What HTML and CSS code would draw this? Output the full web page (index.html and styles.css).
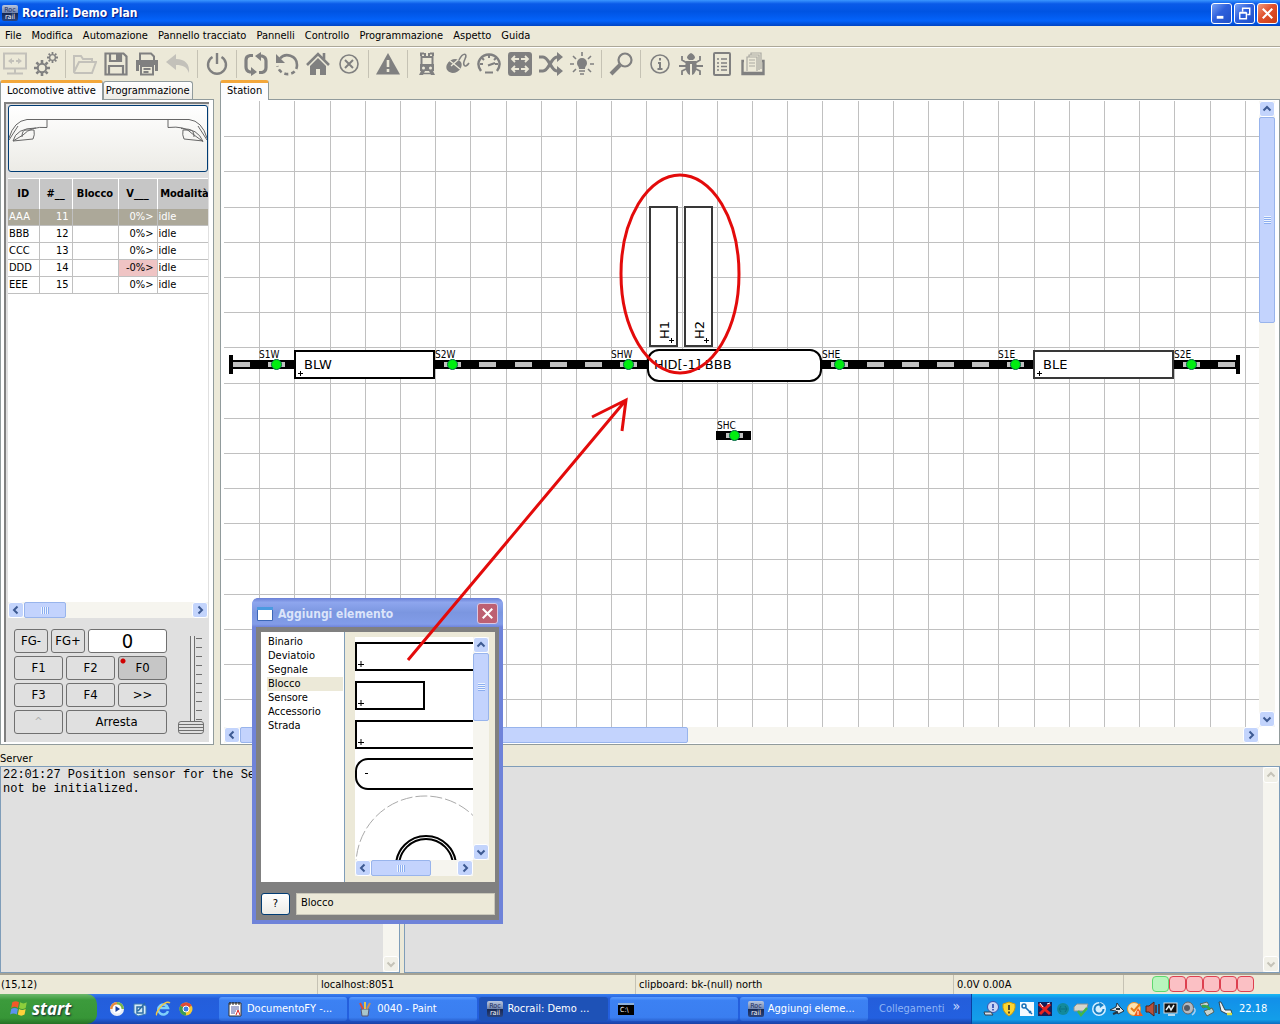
FILE: index.html
```html
<!DOCTYPE html>
<html lang="it">
<head>
  <meta charset="UTF-8">
  <meta name="viewport" content="width=device-width, initial-scale=1.0">
  <title>Rocrail: Demo Plan</title>
  <link rel="stylesheet" href="styles.css">
</head>
<body>
  <svg class="defs" width="0" height="0">
    <defs>
      <linearGradient id="logoFill" x1="0" y1="0" x2="0" y2="1">
        <stop offset="0" stop-color="#b9c6de"/><stop offset=".5" stop-color="#6f83ad"/><stop offset=".5" stop-color="#16264f"/><stop offset="1" stop-color="#2b4580"/>
      </linearGradient>
    </defs>
    <symbol id="up" viewBox="0 0 10 10"><path d="M1.500 6.500 5 3l3.500 3.500" fill="none" stroke="currentColor" stroke-width="2"/></symbol>
    <symbol id="down" viewBox="0 0 10 10"><path d="M1.500 3.500 5 7l3.500-3.500" fill="none" stroke="currentColor" stroke-width="2"/></symbol>
    <symbol id="left" viewBox="0 0 10 10"><path d="M6.500 1.500 3 5l3.500 3.500" fill="none" stroke="currentColor" stroke-width="2"/></symbol>
    <symbol id="right" viewBox="0 0 10 10"><path d="M3.500 1.500 7 5 3.500 8.500" fill="none" stroke="currentColor" stroke-width="2"/></symbol>
    <symbol id="gear" viewBox="-8 -8 16 16">
      <circle r="4.200" fill="none" stroke="currentColor" stroke-width="2"/>
      <path d="M0-8v3M0 5v3M-8 0h3M5 0h3M-5.600-5.600l2 2M3.600 3.600l2 2M-5.600 5.600l2-2M3.600-3.600l2-2" stroke="currentColor" stroke-width="2.600"/>
    </symbol>
  </svg>

  <header class="titlebar">
    <svg class="logo" viewBox="0 0 16 16"><rect width="16" height="16" rx="2" fill="url(#logoFill)"/><text x="8" y="7" fill="#1d2d5c">Roc</text><text x="8" y="14" fill="#fff">rail</text></svg>
    <h1>Rocrail: Demo Plan</h1>
    <button class="win-btn" aria-label="Riduci"><svg viewBox="0 0 20 20"><path d="M5 14h7" stroke="#fff" stroke-width="3"/></svg></button>
    <button class="win-btn" aria-label="Ripristina"><svg viewBox="0 0 20 20"><path d="M5 9.500h7v6H5zM5 9h7M8 8V4.500h7.500v6.500H13M8 4.500h8" stroke="#fff" stroke-width="1.500" fill="none"/></svg></button>
    <button class="win-btn close" aria-label="Chiudi"><svg viewBox="0 0 20 20"><path d="M5 5l10 10M15 5 5 15" stroke="#fff" stroke-width="2.200"/></svg></button>
  </header>

  <nav class="menu">
    <button>File</button>
    <button>Modifica</button>
    <button>Automazione</button>
    <button>Pannello tracciato</button>
    <button>Pannelli</button>
    <button>Controllo</button>
    <button>Programmazione</button>
    <button>Aspetto</button>
    <button>Guida</button>
  </nav>

  <div class="toolbar">
    <button disabled aria-label="Connetti"><svg viewBox="0 0 24 24"><path d="M1 1.500h22v15H1zM12 17v4M4 21.500h16" fill="none" stroke="currentColor" stroke-width="2"/><path d="M5 9l4-3v2h2v2H9v2zM19 9l-4-3v2h-2v2h2v2z" fill="currentColor"/></svg></button>
    <button aria-label="Proprietà"><svg viewBox="0 0 24 24"><use href="#gear" x="0" y="8" width="16" height="16"/><use href="#gear" x="13" y="0" width="11" height="11"/></svg></button>
    <span class="sep"></span>
    <button disabled aria-label="Apri"><svg viewBox="0 0 24 24"><path d="M1 20V4h7l2 3h9v3M1 20 6 10h17l-4 11H2z" fill="none" stroke="currentColor" stroke-width="2"/></svg></button>
    <button aria-label="Salva"><svg viewBox="0 0 24 24"><path d="M1.500 1.500h18l3 3v18h-21zM5 22v-8h14v8M6 2v7h11V2" fill="none" stroke="currentColor" stroke-width="2.200"/><path d="M12 2h4v6h-4z" fill="currentColor"/></svg></button>
    <button aria-label="Stampa"><svg viewBox="0 0 24 24"><path d="M5 9V1.500h11l3 3V9M6 14h12v8.500H6zM8.500 17h7M8.500 20h5" fill="none" stroke="currentColor" stroke-width="2"/><path d="M1 8h22v11h-3v-6H4v6H1z" fill="currentColor"/></svg></button>
    <button disabled aria-label="Annulla"><svg viewBox="0 0 24 24"><path d="M10 2v5c9 0 14 5 13 14-2-6-6-8-13-8v5L0 10z" fill="currentColor"/></svg></button>
    <span class="sep"></span>
    <button aria-label="Corrente"><svg viewBox="0 0 24 24"><path d="M7.500 5a9 9 0 1 0 9 0M12 1v11" fill="none" stroke="currentColor" stroke-width="2.400"/></svg></button>
    <span class="sep"></span>
    <button aria-label="Automatico"><svg viewBox="0 0 24 24"><path d="M9 3.500H6Q2 4 2 8v7q0 4 4 5h2M15 20.500h3q4-1 4-5V9q0-4-4-5h-2" fill="none" stroke="currentColor" stroke-width="3.200"/><path d="M7 15l6 5-6 4zM17 0l-6 4 6 5z" fill="currentColor"/></svg></button>
    <button aria-label="Ripeti"><svg viewBox="0 0 24 24"><path d="M5 6.500C10 .5 22 3 22 13" fill="none" stroke="currentColor" stroke-width="2.600"/><path d="M1 2v9h9z" fill="currentColor"/><path d="M22 13c0 12-17 12-19.500 1" fill="none" stroke="currentColor" stroke-width="2.600" stroke-dasharray="4 3"/></svg></button>
    <button aria-label="Casa"><svg viewBox="0 0 24 24"><path d="M1 13 12 2l11 11M18 1v7" fill="none" stroke="currentColor" stroke-width="2.600"/><path d="M4 14l8-8 8 8v9h-6v-6h-4v6H4z" fill="currentColor"/></svg></button>
    <button aria-label="Azzera"><svg viewBox="0 0 24 24"><circle cx="12" cy="12" r="9" fill="none" stroke="currentColor" stroke-width="1.600"/><path d="M8 8l8 8M16 8l-8 8" stroke="currentColor" stroke-width="2"/></svg></button>
    <span class="sep"></span>
    <button aria-label="Emergenza"><svg viewBox="0 0 24 24"><path d="M12 1 24 22.500H0z" fill="currentColor"/><path d="M12 8v7M12 17v3" stroke="#ece9d8" stroke-width="2.600"/></svg></button>
    <span class="sep"></span>
    <button aria-label="Locomotive"><svg viewBox="0 0 24 24"><path d="M6 4V1.500h3M18 4V1.500h-3M10 1v3M14 1v3M6.500 5h11v9h-11z" fill="none" stroke="currentColor" stroke-width="2"/><path d="M5 12h14v7H5zM6 19h4l-2 4H4zM18 19h-4l2 4h4z" fill="currentColor"/><path d="M7 21.500h10" stroke="currentColor" stroke-width="1.500"/><circle cx="8.500" cy="16" r="1.500" fill="#ece9d8"/><circle cx="15.500" cy="16" r="1.500" fill="#ece9d8"/></svg></button>
    <button aria-label="Regolatore"><svg viewBox="0 0 24 24"><ellipse cx="8" cy="14" rx="8" ry="6.500" transform="rotate(-30 8 14)" fill="currentColor"/><path d="M3 8l11 9M5 14l8-7" stroke="#ece9d8" stroke-width="1.300"/><path d="M13 8c4-8 9-7 6-1s0 10 4 4" fill="none" stroke="currentColor" stroke-width="1.600"/></svg></button>
    <button aria-label="Velocità"><svg viewBox="0 0 24 24"><path d="M4 19C-3 9 6 2.500 12 2.500S27 9 20 19" fill="none" stroke="currentColor" stroke-width="2.400"/><path d="M11 13.500l7-2.500M8 20.500h8M12 3v3M3 12h3M18 12h3M5 6l2 2M19 6l-2 2" fill="none" stroke="currentColor" stroke-width="2"/></svg></button>
    <button aria-label="Scambi"><svg viewBox="0 0 24 24"><rect width="24" height="24" rx="3" fill="currentColor"/><path d="M4 7h7M13 7h7M4 17h7M13 17h7M7 4 4 7l3 3M17 4l3 3-3 3M7 14l-3 3 3 3M17 14l3 3-3 3" fill="none" stroke="#ece9d8" stroke-width="1.800"/></svg></button>
    <button aria-label="Itinerari"><svg viewBox="0 0 24 24"><path d="M0 5h4c6 0 8 14 14 14h2M0 19h4c6 0 8-14 14-14h2" fill="none" stroke="currentColor" stroke-width="3.200"/><path d="M18 0l6 5-6 5zM18 14l6 5-6 5z" fill="currentColor"/></svg></button>
    <button aria-label="Luci"><svg viewBox="0 0 24 24"><path d="M9 17c0-3-2-3-2-6a5 5 0 0 1 10 0c0 3-2 3-2 6z" fill="currentColor"/><path d="M9 19h6M10 22h4M12 0v4M0 12h4M20 12h4M3 4l3 3M21 4l-3 3M3 20l3-3M21 20l-3-3" stroke="currentColor" stroke-width="1.600"/></svg></button>
    <span class="sep"></span>
    <button aria-label="Cerca"><svg viewBox="0 0 24 24"><circle cx="16" cy="8" r="6.500" fill="none" stroke="currentColor" stroke-width="2.200"/><path d="M11 13 2 22" stroke="currentColor" stroke-width="4"/></svg></button>
    <span class="sep"></span>
    <button aria-label="Informazioni"><svg viewBox="0 0 24 24"><circle cx="12" cy="12" r="9" fill="none" stroke="currentColor" stroke-width="1.600"/><path d="M12 6v2.500M10 11h2v6M9.500 17h5" fill="none" stroke="currentColor" stroke-width="2"/></svg></button>
    <button aria-label="Debug"><svg viewBox="0 0 24 24"><path d="M8 6q0-3 4-5 4 2 4 5l-2 2h-4zM7 9h10q2 8-2 13l-2 1V12h-2v11l-2-1Q5 17 7 9z" fill="currentColor"/><path d="M8 11 3 8V4M16 11l5-3V4M7 14H0M17 14h7M7 17l-4 2v4M17 17l4 2v4" fill="none" stroke="currentColor" stroke-width="1.800"/></svg></button>
    <button aria-label="Registro"><svg viewBox="0 0 24 24"><rect x="4" y="1" width="16" height="22" rx="1" fill="none" stroke="currentColor" stroke-width="2"/><path d="M7 7h2M11 7h6M7 11h2M11 11h6M7 14.500h2M11 14.500h6M7 18h2M11 18h6" stroke="currentColor" stroke-width="1.500"/></svg></button>
    <button aria-label="Archivio"><svg viewBox="0 0 24 24"><path d="M6 19V5h10v14M8 5V3h10v15M10 3V1h10v16M8 8h6M8 11h6M8 14h6" fill="none" stroke="#aaa9a2" stroke-width="1.200"/><path d="M3 9H1.500v13h21V9H21M2 21h20" fill="none" stroke="currentColor" stroke-width="2.400"/></svg></button>
  </div>

  <main class="work">
    <section class="loco-book">
      <div class="tabs">
        <button class="tab active">Locomotive attive</button>
        <button class="tab">Programmazione</button>
      </div>
      <div class="page loco-page">
        <div class="loco-panel">
          <button class="loco-image" aria-label="Immagine locomotiva">
            <svg viewBox="0 0 198 65" fill="none" stroke="#666">
              <path d="M0 32Q5 15 18 13.500h20v8Q22 20 14 29L4 35q3-13 23-13M4 35l20-2q2-4 1-9h-8q-4 0-4 7M38 13.500h121M198 32q-5-17-18-18.500h-21v8q17-2 24 6l11 8q-5-13-22-13M194 35l-19-2q-2-4-1-9h7q4 0 4 7M0 34 9 20M198 34l-9-14"/>
            </svg>
          </button>
          <div class="table-area">
            <table class="locos">
              <colgroup><col class="c-id"><col class="c-addr"><col class="c-block"><col class="c-v"><col class="c-mode"></colgroup>
              <thead>
                <tr><th>ID</th><th>#__</th><th>Blocco</th><th>V___</th><th>Modalità</th></tr>
              </thead>
              <tbody>
                <tr class="selected"><td>AAA</td><td>11</td><td></td><td>0%&gt;</td><td>idle</td></tr>
                <tr><td>BBB</td><td>12</td><td></td><td>0%&gt;</td><td>idle</td></tr>
                <tr><td>CCC</td><td>13</td><td></td><td>0%&gt;</td><td>idle</td></tr>
                <tr><td>DDD</td><td>14</td><td></td><td class="reverse">-0%&gt;</td><td>idle</td></tr>
                <tr><td>EEE</td><td>15</td><td></td><td>0%&gt;</td><td>idle</td></tr>
              </tbody>
            </table>
          </div>
          <div class="scroll horizontal">
            <button class="arrow" aria-label="Sinistra"><svg><use href="#left"/></svg></button>
            <div class="rail"><div class="thumb thumb-locos"></div></div>
            <button class="arrow" aria-label="Destra"><svg><use href="#right"/></svg></button>
          </div>
          <div class="throttle">
            <div class="keys">
              <div class="key-row">
                <button class="key small">FG-</button>
                <button class="key small">FG+</button>
                <input class="speed" type="text" value="0" aria-label="Velocità" readonly>
              </div>
              <div class="key-row"><button class="key">F1</button><button class="key">F2</button><button class="key lit">F0</button></div>
              <div class="key-row"><button class="key">F3</button><button class="key">F4</button><button class="key">&gt;&gt;</button></div>
              <div class="key-row"><button class="key" disabled>^</button><button class="key wide">Arresta</button></div>
            </div>
            <div class="slider"><input type="range" min="0" max="100" value="0" aria-label="Velocità"></div>
          </div>
        </div>
      </div>
    </section>

    <section class="plan-book">
      <div class="tabs">
        <button class="tab active">Station</button>
      </div>
      <div class="page plan-page">
        <svg class="plan">
          <g id="grid"></g>
          <g id="tracks"></g>
          <g id="blocks"></g>
          <g id="sensors"></g>
        </svg>
        <div class="scroll vertical">
          <button class="arrow" aria-label="Su"><svg><use href="#up"/></svg></button>
          <div class="rail"><div class="thumb thumb-plan-v"></div></div>
          <button class="arrow" aria-label="Giù"><svg><use href="#down"/></svg></button>
        </div>
        <div class="scroll horizontal">
          <button class="arrow" aria-label="Sinistra"><svg><use href="#left"/></svg></button>
          <div class="rail"><div class="thumb thumb-plan-h"></div></div>
          <button class="arrow" aria-label="Destra"><svg><use href="#right"/></svg></button>
        </div>
      </div>
    </section>
  </main>

  <section class="server">
    <label for="serverLog">Server</label>
    <div class="logs">
      <div class="log log-server">
        <textarea id="serverLog" readonly>22:01:27 Position sensor for the Sel
not be initialized.</textarea>
        <div class="scroll vertical off">
          <div class="rail"></div>
          <button class="arrow" aria-label="Giù" disabled><svg><use href="#down"/></svg></button>
        </div>
      </div>
      <div class="log log-monitor">
        <textarea aria-label="Monitor" readonly></textarea>
        <div class="scroll vertical off">
          <button class="arrow" aria-label="Su" disabled><svg><use href="#up"/></svg></button>
          <div class="rail"></div>
          <button class="arrow" aria-label="Giù" disabled><svg><use href="#down"/></svg></button>
        </div>
      </div>
    </div>
  </section>

  <footer class="status">
    <span>(15,12)</span>
    <span>localhost:8051</span>
    <span>clipboard: bk-(null) north</span>
    <span>0.0V 0.00A</span>
    <span class="leds"><i class="led on"></i><i class="led"></i><i class="led"></i><i class="led"></i><i class="led"></i><i class="led"></i></span>
  </footer>

  <div class="taskbar">
    <button class="start">
      <svg viewBox="0 0 18 18"><path d="M3 3q3-2 6 0L8 8Q5 6 2 8z" fill="#f2582a"/><path d="M10 3q3 2 6 0l-1 5q-3 2-6 0z" fill="#8cce3c"/><path d="M2 9q3-2 6 0l-1 5q-3-2-6 0z" fill="#5b93f0"/><path d="M9 9q3 2 6 0l-1 5q-3 2-6 0z" fill="#fcd13b"/></svg>
      start
    </button>
    <div class="quick">
      <button aria-label="Media Player"><svg viewBox="0 0 16 16"><circle cx="8" cy="8" r="7" fill="#e9eef7"/><path d="M8 1a7 7 0 0 1 7 7h-3a4 4 0 0 0-4-4z" fill="#7ab648"/><path d="M1 8a7 7 0 0 1 7-7v3a4 4 0 0 0-4 4z" fill="#e78a3d"/><circle cx="8" cy="8" r="4.500" fill="#fff"/><path d="M6.500 5v6L11 8z" fill="#1b3f9c"/></svg></button>
      <button aria-label="Mostra desktop"><svg viewBox="0 0 16 16"><path d="M2 3h8l4 2v8l-8 2-4-3z" fill="#d7ebf7" stroke="#3c7db5"/><path d="M5 6h6v6H5zM6 10l7-8" fill="none" stroke="#2a6ca5" stroke-width="1.500"/></svg></button>
      <button aria-label="Internet Explorer"><svg viewBox="0 0 16 16"><path d="M13 10a5 5 0 1 1 0-3H4" fill="none" stroke="#7fd0fa" stroke-width="2.500"/><path d="M2 14C-1 13 10-2 15 2" fill="none" stroke="#f4c842" stroke-width="1.500"/></svg></button>
      <button aria-label="Chrome"><svg viewBox="0 0 16 16"><circle cx="8" cy="8" r="6.500" fill="#f5cc35"/><path d="M8 8 2.400 4.700A6.500 6.500 0 0 1 13.600 4.700z" fill="#df4b37"/><path d="M8 8 2.400 4.700A6.500 6.500 0 0 0 8 14.500z" fill="#3d9c52"/><circle cx="8" cy="8" r="3" fill="#3d7de8" stroke="#fff"/></svg></button>
    </div>
    <div class="tasks">
      <button class="task"><svg viewBox="0 0 16 16"><path d="M2 2h12v13H2z" fill="#fff" stroke="#333"/><path d="M3 1v3M6 1v3M9 1v3M12 1v3" stroke="#222"/><path d="M4 6h8M4 8h8M4 10h5M4 12h4" stroke="#5360a8"/><path d="M9 14l2-5 2 5" stroke="#d22" fill="none"/></svg><span>DocumentoFY -...</span></button>
      <button class="task"><svg viewBox="0 0 16 16"><path d="M4 8h8l-1 7H5z" fill="#a7c5cb" stroke="#557"/><path d="M6 8 3 2" stroke="#e24b31" stroke-width="2"/><path d="M8 8V1" stroke="#e8c14a" stroke-width="2"/><path d="M10 8l3-6" stroke="#c99157" stroke-width="2"/></svg><span>0040 - Paint</span></button>
      <button class="task current"><svg class="logo" viewBox="0 0 16 16"><rect width="16" height="16" rx="2" fill="url(#logoFill)"/><text x="8" y="7" fill="#1d2d5c">Roc</text><text x="8" y="14" fill="#fff">rail</text></svg><span>Rocrail: Demo ...</span></button>
      <button class="task" aria-label="Prompt"><svg viewBox="0 0 16 16"><rect x="0" y="3" width="16" height="11" fill="#000"/><path d="M0 3h16" stroke="#8fb0d8" stroke-width="2"/><text x="2" y="11" font-size="7" fill="#fff">C:\</text></svg></button>
      <button class="task"><svg class="logo" viewBox="0 0 16 16"><rect width="16" height="16" rx="2" fill="url(#logoFill)"/><text x="8" y="7" fill="#1d2d5c">Roc</text><text x="8" y="14" fill="#fff">rail</text></svg><span>Aggiungi eleme...</span></button>
    </div>
    <div class="links"><span>Collegamenti</span><button aria-label="Altri collegamenti">»</button></div>
    <div class="tray">
      <svg viewBox="0 0 16 16"><circle cx="10" cy="6" r="5.500" fill="#c9d6f5" stroke="#3453b0"/><path d="M10 3v4M10 8v1.500" stroke="#1c3aa8" stroke-width="1.500"/><path d="M1 11h7l2 3H2z" fill="#d9dde6" stroke="#345"/></svg>
      <svg viewBox="0 0 16 16"><path d="M8 1l6 2q1 8-6 12Q1 11 2 3z" fill="#fbd532" stroke="#c69a10"/><path d="M8 4v5M8 10.500v2" stroke="#333" stroke-width="1.700"/></svg>
      <svg viewBox="0 0 16 16"><rect x="1" y="1" width="14" height="14" fill="#f5faff"/><circle cx="5" cy="5" r="2" fill="none" stroke="#1770b8" stroke-width="1.500"/><path d="M6 6l7 7M10 12l2-2" stroke="#1770b8" stroke-width="1.600"/></svg>
      <svg viewBox="0 0 16 16"><rect x="1" y="1" width="14" height="14" fill="#14205a"/><path d="M2 3l11 10M13 3 3 13" stroke="#e52421" stroke-width="3"/><path d="M3 2l3 4M10 3l3-1" stroke="#fff"/></svg>
      <svg viewBox="0 0 16 16"><circle cx="8" cy="8" r="6" fill="#138a9a"/><path d="M4 8h8M6 5l-2 3 2 3M10 5l2 3-2 3" fill="none" stroke="#0b7083"/></svg>
      <svg viewBox="0 0 16 16"><path d="M1 6l3-3h11l-2 7H1z" fill="#d6d6cd" stroke="#8b9090"/><path d="M5 10l3 4 6-7" fill="none" stroke="#44b549" stroke-width="2.500"/></svg>
      <svg viewBox="0 0 16 16"><circle cx="8" cy="8" r="7" fill="#d5efff"/><path d="M10 4a4.500 4.500 0 1 0 2.500 4" fill="none" stroke="#1680c6" stroke-width="2"/><path d="M8 1l5 3-4 3z" fill="#1680c6"/></svg>
      <svg viewBox="0 0 16 16"><path d="M1 9l6-3 1-4 3 4 4 4-6 3-2-3z" fill="#dce3e6" stroke="#243440"/><path d="M7 8h4M4 13l5-2" stroke="#243440" stroke-width="2"/></svg>
      <svg viewBox="0 0 16 16"><circle cx="7" cy="8" r="6.500" fill="#fbe3b0" stroke="#ec942a"/><path d="M4 7l3 3 6-7" fill="none" stroke="#e57c18" stroke-width="2"/><path d="M11 7l5 8H7z" fill="#ef5c1d"/><path d="M11 10v4" stroke="#fff"/></svg>
      <svg viewBox="0 0 16 16"><path d="M1 5h3l5-4v14l-5-4H1z" fill="#b9523b" stroke="#51221b"/><path d="M11 4v8M14 3v10" stroke="#51221b" stroke-width="1.500"/></svg>
      <svg viewBox="0 0 16 16"><rect x="1" y="2" width="13" height="10" fill="#111" stroke="#d6dce0"/><path d="M3 9l3-4 2 4 3-5M5 14h7" fill="none" stroke="#e8f0f4" stroke-width="1.500"/></svg>
      <svg viewBox="0 0 16 16"><ellipse cx="7" cy="7" rx="5.500" ry="6" fill="#b6bac0" stroke="#666"/><circle cx="6" cy="7" r="3" fill="#555c66"/><path d="M13 7q3 3-2 7" fill="none" stroke="#a9d0f0" stroke-width="1.500"/></svg>
      <svg viewBox="0 0 16 16"><path d="M1 3l7-2 2 3-6 3zM5 10l8-3 2 4-7 4z" fill="#c8d3cf" stroke="#51645f"/><path d="M3 5q8 0 7 4" fill="none" stroke="#34a64a" stroke-width="2.500"/></svg>
      <svg viewBox="0 0 16 16"><path d="M2 1l2 9 6 3h5l-1-4H8L4 1z" fill="#eff3f4" stroke="#34454f"/><path d="M10 13h5" stroke="#d7df45" stroke-width="2.500"/></svg>
      <time>22.18</time>
    </div>
  </div>

  <div class="dialog" role="dialog" aria-label="Aggiungi elemento">
    <div class="dialog-title">
      <svg class="dialog-icon" viewBox="0 0 16 14"><path d="M.5.5h15v13H.5z" fill="#fff" stroke="#3c67b8"/><path d="M0 1.500h16" stroke="#4a9ae0" stroke-width="3"/></svg>
      <h2>Aggiungi elemento</h2>
      <button class="win-btn close faded" aria-label="Chiudi"><svg viewBox="0 0 20 20"><path d="M5 5l10 10M15 5 5 15" stroke="#fff" stroke-width="2.200"/></svg></button>
    </div>
    <div class="dialog-body">
      <div class="picker">
        <ul class="kinds">
          <li><button>Binario</button></li>
          <li><button>Deviatoio</button></li>
          <li><button>Segnale</button></li>
          <li class="selected"><button>Blocco</button></li>
          <li><button>Sensore</button></li>
          <li><button>Accessorio</button></li>
          <li><button>Strada</button></li>
        </ul>
        <div class="preview">
          <svg class="shapes" fill="none" stroke="#000" stroke-width="2">
            <path d="M130 6H1v27h129M1 45h68v27H1zM130 84H1v27h129"/>
            <rect x="1" y="122" width="160" height="30" rx="12"/>
            <path d="M3 27.500h6M6 24v6M3 66.500h6M6 63v6M3 105.500h6M6 102v6M10 136.500h3" stroke-width="1"/>
            <circle cx="70" cy="228" r="69" stroke="#aaa" stroke-width="1" stroke-dasharray="12 3"/>
            <circle cx="71" cy="229" r="30"/>
            <circle cx="71" cy="229" r="27"/>
          </svg>
          <div class="scroll vertical">
            <button class="arrow" aria-label="Su"><svg><use href="#up"/></svg></button>
            <div class="rail"><div class="thumb thumb-preview-v"></div></div>
            <button class="arrow" aria-label="Giù"><svg><use href="#down"/></svg></button>
          </div>
          <div class="scroll horizontal">
            <button class="arrow" aria-label="Sinistra"><svg><use href="#left"/></svg></button>
            <div class="rail"><div class="thumb thumb-preview-h"></div></div>
            <button class="arrow" aria-label="Destra"><svg><use href="#right"/></svg></button>
          </div>
        </div>
      </div>
      <div class="dialog-foot">
        <button class="help">?</button>
        <input type="text" value="Blocco" aria-label="Elemento" readonly>
      </div>
    </div>
  </div>

  <svg class="marks" fill="none" stroke="#e30b0b" stroke-width="3">
    <ellipse cx="680" cy="274" rx="59" ry="99"/>
    <path d="M408 660 626 400M592 417l34-17-4 31"/>
  </svg>

  <script src="script.js"></script>
</body>
</html>
```
FILE: styles.css
```css
* {
  box-sizing: border-box;
}
body {
  margin: 0;
  height: 100vh;
  min-height: 700px;
  display: flex;
  flex-direction: column;
  position: relative;
  overflow: hidden;
  background: #ece9d8;
  color: #000;
  font-family: "DejaVu Sans Condensed", "DejaVu Sans", sans-serif;
  font-size: 11px;
  line-height: 14px;
}
button, input, textarea {
  font: inherit;
  color: inherit;
  margin: 0;
  padding: 0;
  border: 0;
  background: none;
}
button {
  white-space: nowrap;
}
.defs {
  position: absolute;
}

/* title bar */
.titlebar {
  flex: none;
  height: 26px;
  display: flex;
  align-items: center;
  gap: 2px;
  padding: 0 2px;
  background: linear-gradient(#3b96ff, #0a5ae8 15%, #0054e3 45%, #0463fb 80%, #0044c4);
}
.logo {
  width: 16px;
  height: 16px;
  overflow: visible;
}
.logo text {
  font-size: 7px;
  text-anchor: middle;
}
.titlebar h1, .dialog-title h2 {
  flex: 1;
  margin: 0;
  padding-left: 2px;
  font-size: 12px;
  line-height: 16px;
  font-weight: bold;
  color: #fff;
  text-shadow: 1px 1px 1px #0a1883;
}
.win-btn {
  width: 21px;
  height: 21px;
  border: 1px solid #fff;
  border-radius: 3px;
  background: linear-gradient(135deg, #7aa3f5, #2e60dc 45%, #2050c8);
}
.win-btn svg {
  display: block;
  width: 19px;
  height: 19px;
}
.win-btn.close {
  background: linear-gradient(135deg, #f09a7c, #e0502c 45%, #c93c14);
}
.win-btn.close.faded {
  background: #bd6072;
  border-color: #d9c8e4;
}

.menu {
  flex: none;
  height: 21px;
  display: flex;
  align-items: center;
  gap: 10px;
  padding: 0 5px 1px;
  border-bottom: 1px solid #aca899;
}

/* toolbar */
.toolbar {
  flex: none;
  height: 32px;
  display: flex;
  align-items: center;
  border-top: 1px solid #fff;
}
.toolbar button {
  width: 31px;
  height: 30px;
  color: #808080;
}
.toolbar button:disabled {
  color: #c3c1ba;
}
.toolbar svg {
  display: block;
  margin: 0 auto 0 3px;
  width: 24px;
  height: 24px;
}
.sep {
  width: 1px;
  height: 28px;
  margin: 0 4px 0 3px;
  background: #c5c2b4;
}

/* notebooks */
.work {
  flex: 1;
  min-height: 0;
  display: flex;
  gap: 6px;
}
.loco-book, .plan-book {
  display: flex;
  flex-direction: column;
  min-width: 0;
}
.loco-book {
  flex: 0 0 214px;
}
.plan-book {
  flex: 1;
}
.tabs {
  height: 20px;
  display: flex;
  align-items: flex-end;
  flex: none;
}
.tab {
  height: 18px;
  padding: 0 2px;
  border: 1px solid #919b9c;
  border-bottom: 0;
  border-radius: 3px 3px 0 0;
  background: linear-gradient(#fff, #ecebe5);
}
.tab.active {
  position: relative;
  height: 20px;
  padding: 0 6px 2px;
  margin-bottom: -1px;
  border-top: 3px solid #f3a73b;
  background: #fcfcfe;
}
.page {
  flex: 1;
  min-height: 0;
  border: 1px solid #919b9c;
  background: #fff;
}
.loco-page {
  display: flex;
  padding: 2px 4px 2px 3px;
}
.loco-panel {
  flex: 1;
  min-width: 0;
  display: flex;
  flex-direction: column;
  border: 1px solid #808080;
  border-width: 2px 0 0 2px;
  padding: 1px 1px 0 2px;
  background: #e0e0e0;
}
.loco-image {
  flex: none;
  height: 67px;
  margin: 0 0 6px;
  border: 1px solid #003c74;
  border-radius: 3px;
  background: linear-gradient(#fff, #ecebe6);
  overflow: hidden;
}
.loco-image svg {
  display: block;
  width: 100%;
  height: 65px;
}

/* locomotive table */
.table-area {
  flex: 1;
  min-height: 0;
  overflow: hidden;
  background: #fff;
}
.locos {
  width: 204px;
  table-layout: fixed;
  border-collapse: collapse;
}
.c-id { width: 31px; }
.c-addr { width: 33px; }
.c-block { width: 46px; }
.c-v { width: 39px; }
.c-mode { width: 55px; }
.locos th, .locos td {
  padding: 0 1px;
  border-right: 1px solid #c0c0c0;
  white-space: nowrap;
}
.locos th {
  height: 30px;
  background: #c6c6c6;
  border-top: 1px solid #fff;
  border-right: 1px solid #fff;
}
.locos td {
  height: 17px;
  line-height: 16px;
  border-bottom: 1px solid #c0c0c0;
}
.locos td:nth-child(2), .locos td:nth-child(4) {
  text-align: right;
  padding-right: 3px;
}
.locos .selected td {
  background: #aca899;
  color: #fff;
}
.locos .reverse {
  background: #efc4c4;
}

/* scroll bars */
.scroll {
  display: flex;
  background: #f6f5ef;
}
.scroll.horizontal {
  flex: none;
  height: 16px;
}
.scroll.vertical {
  flex-direction: column;
  width: 16px;
}
.arrow {
  flex: none;
  width: 16px;
  height: 16px;
  color: #3d5a92;
  border: 1px solid #fff;
  border-radius: 3px;
  background: #c3d4fc;
}
.arrow svg {
  display: block;
  margin: 2px;
  width: 10px;
  height: 10px;
}
.off .arrow {
  color: #c5c3b8;
  background: #f1f0e8;
}
.rail {
  flex: 1;
  min-width: 0;
  min-height: 0;
}
.thumb {
  border: 1px solid #98b4ec;
  border-radius: 2px;
  background-color: #c3d3fd;
  background-repeat: no-repeat;
  background-position: center;
}
.horizontal .thumb {
  height: 16px;
  background-image: repeating-linear-gradient(90deg, #eef4fe 0 1px, #8caef0 1px 2px);
  background-size: 8px 7px;
}
.vertical .thumb {
  width: 16px;
  background-image: repeating-linear-gradient(#eef4fe 0 1px, #8caef0 1px 2px);
  background-size: 7px 8px;
}
.thumb-locos { width: 42px; }
.thumb-plan-v { height: 206px; }
.thumb-plan-h { width: 448px; max-width: 60%; }
.thumb-preview-v { height: 68px; }
.thumb-preview-h { width: 60px; }

/* throttle */
.throttle {
  flex: none;
  display: flex;
  justify-content: space-between;
  padding: 11px 4px 8px 6px;
}
.keys {
  width: 153px;
  display: flex;
  flex-direction: column;
  gap: 3px;
}
.key-row {
  display: flex;
  gap: 3px;
}
.key {
  flex: none;
  width: 49px;
  height: 24px;
  border: 1px solid #707070;
  border-radius: 3px;
  font-size: 13px;
}
.key.small {
  width: 34px;
}
.key.wide {
  width: 101px;
}
.key:disabled {
  color: #b0b0b0;
  font-size: 11px;
}
.key.lit {
  background: radial-gradient(circle at 4px 4px, #d00000 2px, #c6c6c6 3px);
}
.speed {
  flex: 1;
  min-width: 0;
  height: 24px;
  border: 1px solid #707070;
  border-radius: 3px;
  background: #fff;
  text-align: center;
  font-size: 20px;
}
.slider {
  width: 26px;
  height: 105px;
  padding-top: 7px;
  background: repeating-linear-gradient(#707070 0 1px, transparent 1px 9px) 18px 9px / 6px 84px no-repeat;
}
.slider input {
  appearance: none;
  display: block;
  writing-mode: vertical-lr;
  direction: rtl;
  width: 26px;
  height: 98px;
  background: linear-gradient(90deg, #707070 1px, #e8e8e8 1px 4px, #707070 4px) 12px 0 / 5px 88px no-repeat;
}
.slider input::-webkit-slider-thumb {
  appearance: none;
  width: 26px;
  height: 13px;
  border: 1px solid #707070;
  border-radius: 3px;
  background: repeating-linear-gradient(#e0e0e0 0 2px, #707070 2px 3px);
}

/* track plan */
.plan-page {
  display: grid;
  grid-template-columns: 1fr 16px;
  grid-template-rows: 1fr 16px;
  padding: 1px 4px 1px 3px;
}
.plan {
  width: 100%;
  height: 100%;
  min-height: 0;
  overflow: hidden;
}
.grid-line {
  stroke: #c0c0c0;
}
.block {
  fill: #fff;
  stroke: #000;
  stroke-width: 2;
}
.block.soft {
  stroke: #383838;
}
.block-name {
  font-family: "DejaVu Sans", sans-serif;
  font-size: 13px;
}
.sensor-name {
  font-size: 10px;
}

/* server log */
.server {
  flex: none;
  height: 228px;
  padding-top: 7px;
  display: flex;
  flex-direction: column;
}
.logs {
  flex: 1;
  display: flex;
  gap: 4px;
}
.log {
  display: flex;
  border: 1px solid #7f9db9;
  background: #e0e0e0;
}
.log-server {
  flex: 0 0 400px;
}
.log-monitor {
  flex: 1;
}
.log textarea {
  flex: 1;
  min-width: 0;
  resize: none;
  overflow: hidden;
  padding: 1px 2px;
  font-family: "Liberation Mono", monospace;
  font-size: 12px;
  line-height: 14px;
}

/* status bar */
.status {
  flex: none;
  height: 21px;
  display: grid;
  grid-template-columns: 317fr 318fr 318fr 170fr 157fr;
  border-top: 2px solid #a5a294;
}
.status span {
  padding: 3px 3px 0;
  border-left: 1px solid #c5c2b4;
}
.status span:first-child {
  padding-left: 1px;
  border-left: 0;
}
.status .leds {
  display: flex;
  padding: 1px 26px 0 0;
  justify-content: flex-end;
}
.led {
  width: 17px;
  height: 16px;
  border: 1px solid #dd4050;
  border-radius: 4px;
  background: #fbc0c4;
}
.led.on {
  border-color: #5fd870;
  background: #b9f5bd;
}

/* taskbar */
.taskbar {
  flex: none;
  height: 30px;
  display: flex;
  color: #fff;
  background: linear-gradient(#3a80f0, #245edb 15%, #2360e0 80%, #1941a5);
}
.start {
  width: 97px;
  display: flex;
  align-items: center;
  gap: 3px;
  padding-left: 9px;
  border-radius: 0 10px 10px 0;
  background: linear-gradient(#6cb86c, #3c9b3c 20%, #379637 80%, #257025);
  font-family: "Noto Sans", sans-serif;
  font-size: 17px;
  font-weight: bold;
  font-style: italic;
  text-shadow: 1px 1px 2px #123;
}
.start svg {
  width: 20px;
  height: 20px;
}
.quick {
  width: 121px;
  display: flex;
  align-items: center;
  gap: 7px;
  padding-left: 12px;
}
.quick svg {
  display: block;
  width: 16px;
  height: 16px;
}
.tasks {
  flex: 1;
  min-width: 0;
  display: flex;
  gap: 2px;
  padding: 3px 1px;
}
.task {
  flex: 1;
  min-width: 0;
  display: flex;
  align-items: center;
  gap: 4px;
  padding: 0 8px;
  border-radius: 3px;
  background: linear-gradient(#5a9bff, #3c81f3 15%, #3a7ef0 85%, #2a63d0);
}
.task.current {
  background: #1e52b7;
}
.task svg {
  flex: none;
  width: 16px;
  height: 16px;
}
.links {
  width: 102px;
  display: flex;
  gap: 8px;
  padding: 8px 0 0 10px;
  color: #8fb4f5;
}
.links button {
  height: 8px;
  line-height: 4px;
  font-size: 14px;
  color: #c9dcff;
}
.tray {
  width: 309px;
  display: flex;
  align-items: center;
  gap: 2px;
  padding-left: 11px;
  border-left: 1px solid #0a3fa0;
  background: linear-gradient(#19b9f3, #1290e9 15%, #139ee9 85%, #0d6cc0);
}
.tray svg {
  width: 16px;
  height: 16px;
}
.tray time {
  padding-left: 4px;
}

/* add element dialog */
.dialog {
  position: absolute;
  left: 252px;
  top: 598px;
  width: 251px;
  height: 326px;
  display: flex;
  flex-direction: column;
  border: 4px solid #6f83d9;
  border-top: 0;
  border-radius: 7px 7px 0 0;
  background: #808080;
}
.dialog-title {
  flex: none;
  height: 29px;
  margin: 0 -4px;
  padding: 2px 5px 0 5px;
  display: flex;
  align-items: center;
  gap: 3px;
  border-radius: 6px 6px 0 0;
  background: linear-gradient(#6a7fd5, #8ea6ee 15%, #7b96e0 50%, #829ce8 90%, #6f83d9);
}
.dialog-title h2 {
  color: #dbe4fa;
  text-shadow: none;
}
.dialog-icon {
  width: 16px;
  height: 14px;
}
.dialog-body {
  flex: 1;
  min-height: 0;
  display: flex;
  flex-direction: column;
  gap: 11px;
  padding: 5px 4px 5px 5px;
}
.picker {
  flex: 1;
  min-height: 0;
  display: flex;
}
.kinds {
  flex: 0 0 84px;
  margin: 0;
  padding: 3px 1px 0 6px;
  list-style: none;
  background: #fff;
  border: 1px solid #7f9db9;
  border-width: 0 1px 0 0;
}
.kinds button {
  display: block;
  width: 100%;
  text-align: left;
  padding-left: 1px;
}
.kinds .selected {
  background: #ece9d8;
}
.preview {
  flex: 1;
  min-width: 0;
  display: grid;
  grid-template-columns: 1fr 16px;
  grid-template-rows: 1fr 16px;
  padding: 5px 6px 6px 10px;
  background: #ece9d8;
}
.shapes {
  width: 100%;
  height: 100%;
  min-height: 0;
  background: #fff;
  overflow: hidden;
}
.dialog-foot {
  flex: none;
  display: flex;
  gap: 6px;
  height: 22px;
}
.help {
  width: 29px;
  border: 1px solid #003c74;
  border-radius: 3px;
  background: linear-gradient(#fff, #ecebe6);
}
.dialog-foot input {
  flex: 1;
  min-width: 0;
  padding: 0 4px 3px;
  border: 1px solid #c9c7ba;
  background: #ece9d8;
}

.marks {
  position: absolute;
  inset: 0;
  width: 100%;
  height: 100%;
  pointer-events: none;
}
```
FILE: script.js
```js
const SVG = 'http://www.w3.org/2000/svg';
const CELL = 35.2;

function add(parent, tag, attrs, text) {
  const el = document.createElementNS(SVG, tag);
  Object.entries(attrs).forEach(([key, value]) => el.setAttribute(key, value));
  if (text) el.textContent = text;
  document.getElementById(parent).appendChild(el);
}

const at = (cells) => Math.round(cells * CELL);

// grid
for (let i = 1; i < 60; i++) {
  const p = at(i) + 0.5;
  add('grid', 'path', { class: 'grid-line', d: `M${p} 0V2000M0 ${p}H3000` });
}

// track runs, row 7
function track(from, to, row) {
  add('tracks', 'rect', { x: from, y: at(row) + 13, width: to - from, height: 9 });
}
function dash(x, row) {
  add('tracks', 'rect', { x: x, y: at(row) + 15, width: 17, height: 5, fill: '#c0c0c0' });
}
track(6, 72, 7);
track(210, 424, 7);
track(597, 810, 7);
track(949, 1014, 7);
[7, 8, 9, 10, 18, 19, 20, 21].forEach(cell => dash(at(cell) + 9, 7));
dash(9, 7);
dash(994, 7);
add('tracks', 'rect', { x: 5, y: 254, width: 4, height: 19 });
add('tracks', 'rect', { x: 1012, y: 254, width: 4, height: 19 });
track(492, 527, 9);

// blocks
function block(x, name, style) {
  add('blocks', 'rect', { class: 'block ' + style, x: x, y: 250, width: 139, height: 27 });
  add('blocks', 'text', { class: 'block-name', x: x + 9, y: 268 }, name);
  add('blocks', 'path', { d: `M${x + 3} 272.5h5M${x + 5.5} 270v5`, stroke: '#000' });
}
function stub(x, name) {
  add('blocks', 'rect', { class: 'block soft', x: x, y: 106, width: 27, height: 139 });
  add('blocks', 'text', { class: 'block-name', transform: `translate(${x + 19} 238) rotate(-90)` }, name);
  add('blocks', 'path', { d: `M${x + 19} 239.5h5M${x + 21.5} 237v5`, stroke: '#000' });
}
block(71, 'BLW', '');
block(810, 'BLE', 'soft');
stub(426, 'H1');
stub(461, 'H2');
add('blocks', 'rect', { class: 'block', x: 424, y: 249, width: 173, height: 31, rx: 11 });
add('blocks', 'text', { class: 'block-name', x: 430, y: 268 }, 'HID[-1] BBB');

// sensors
[[1, 7, 'S1W'], [6, 7, 'S2W'], [11, 7, 'SHW'], [17, 7, 'SHE'], [22, 7, 'S1E'], [27, 7, 'S2E'], [14, 9, 'SHC']].forEach(([cell, row, name]) => {
  const x = at(cell);
  const y = at(row);
  dash(x + 9, row);
  add('sensors', 'circle', { cx: x + 17.5, cy: y + 17.5, r: 5, fill: '#00ee10', stroke: '#064', 'stroke-width': 1 });
  add('sensors', 'text', { class: 'sensor-name', x: x, y: y + 11 }, name);
});
```
